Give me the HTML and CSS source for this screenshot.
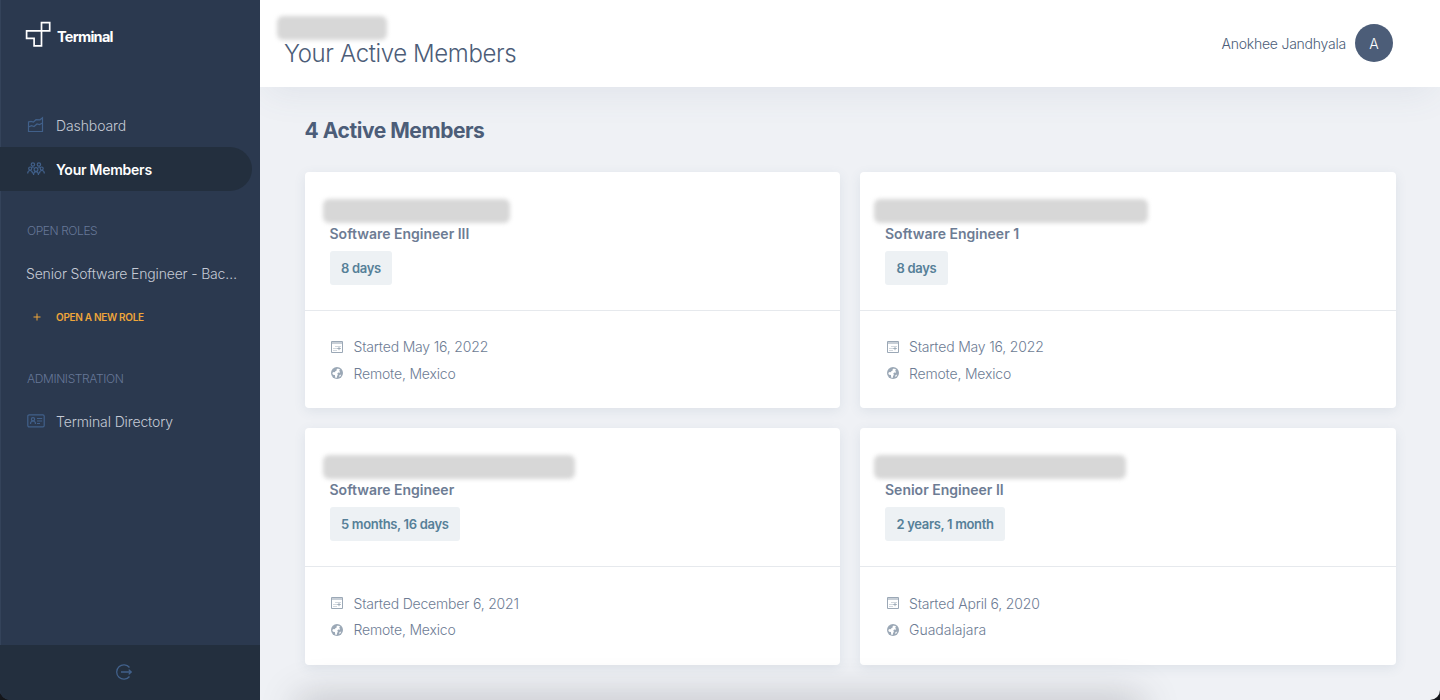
FILE: index.html
```
<!DOCTYPE html>
<html lang="en">
<head>
<meta charset="utf-8">
<title>Terminal - Your Active Members</title>
<link rel="stylesheet" href="styles.css">
</head>
<body>
<svg class="defs" aria-hidden="true">
  <symbol id="calendar" viewBox="0 0 12 12">
    <path d="M.5.500h11v11H.5z" fill="none" stroke="currentColor"/>
    <path d="M1 1h10v2H1z" fill="currentColor" opacity=".55"/>
    <path d="M4.500 5.500h1M6.500 5.500h1M8.500 5.500h1M2.500 7.500h1M4.500 7.500h1M2.500 9.500h1M4.500 9.500h1M6.200 7.500h3.600M8 5.900v3.300" stroke="currentColor" stroke-width=".9"/>
  </symbol>
  <symbol id="globe" viewBox="0 0 12 12">
    <circle cx="6" cy="6" r="6" fill="currentColor"/>
    <path d="M6.800 1.500L5.500 2.600 5.700 3.600 4 4.500 4.200 5.300 2.600 5.100 1.200 6 2 7.700 3.900 8 4.300 10.700 5.600 10.900 6.100 8.900 6.900 7.700 6.300 6.400 7.200 5.500 8.600 5.700 9.200 4.800 8 4 9.200 2.600z" fill="#fff"/>
    <path d="M8.400 8.200l1.800-.7-.7 1.700-1.300.9z" fill="#fff"/>
  </symbol>
</svg>
<div class="window">
  <aside class="sidebar">
    <div class="brand">
      <svg class="brand-mark" viewBox="0 0 26 26"><path d="M16.500 1.700h8.200v8.200H16.500zM1.600 9.900h14.900v14.900H9.100v-7.500H1.600z" fill="none" stroke="currentColor" stroke-width="1.700"/></svg>
      <span class="brand-name">Terminal</span>
    </div>
    <nav class="nav">
      <a class="nav-item">
        <svg class="nav-icon" viewBox="0 0 18 18"><path d="M1.500 15.500V6l2.500-.7 2.500.7L9 3.700l4 .1 2.500-2v13.700zM1.500 11l3-1.300 2.500.8 3-2.500 2.500.5 3-1.500" fill="none" stroke="currentColor" stroke-width="1.200"/></svg>
        <span class="t-dashboard">Dashboard</span>
      </a>
      <a class="nav-item active">
        <svg class="nav-icon" viewBox="0 0 18 18" fill="none" stroke="currentColor" stroke-width="1.200"><circle cx="5.900" cy="4.500" r="1.700"/><circle cx="11.900" cy="4.500" r="1.700"/><circle cx="3.200" cy="8.500" r="1.500"/><circle cx="14.700" cy="8.500" r="1.500"/><circle cx="9" cy="9.500" r="1.900"/><path d="M.7 13.500c0-4 4.800-4 4.800 0M12.500 13.500c0-4 4.800-4 4.800 0M6.500 15c0-4.500 5-4.500 5 0M5 6.600l1.500 1.200M13 6.600l-1.500 1.200"/></svg>
        <span class="t-members">Your Members</span>
      </a>
    </nav>
    <h3 class="nav-title t-roles">OPEN ROLES</h3>
    <a class="nav-role"><span class="t-role">Senior Software Engineer - Bac…</span></a>
    <a class="nav-item add">
      <svg class="plus-icon" viewBox="0 0 18 18"><path d="M6.500 9h7M10 5.500v7" stroke="currentColor"/></svg>
      <span class="t-add">OPEN A NEW ROLE</span>
    </a>
    <h3 class="nav-title t-admin">ADMINISTRATION</h3>
    <a class="nav-item">
      <svg class="nav-icon" viewBox="0 0 18 18" fill="none" stroke="currentColor" stroke-width="1.200"><rect x=".8" y="2.900" width="16.400" height="12" rx="1.300"/><circle cx="6" cy="7.200" r="1.600"/><path d="M3.500 12c0-4 5-4 5 0M10 6.500h5.200M10 9h5.200M10 11.500h3"/></svg>
      <span class="t-directory">Terminal Directory</span>
    </a>
    <div class="logout">
      <svg class="logout-icon" viewBox="0 0 16 16" fill="none" stroke="currentColor" stroke-width="1.300"><path d="M13.500 3.500a7.200 7.200 0 1 0 0 9M5 8h10M12.700 5.600 15.200 8l-2.500 2.400"/></svg>
    </div>
  </aside>
  <main class="main">
    <header class="topbar">
      <div class="heading">
        <span class="redacted r-top"></span>
        <h1 class="page-title">Your Active Members</h1>
      </div>
      <div class="user"><span class="user-name">Anokhee Jandhyala</span><span class="avatar">A</span></div>
    </header>
    <section class="content">
      <h2 class="section-title">4 Active Members</h2>
      <div class="cards">
        <article class="card">
          <div class="card-head">
            <span class="redacted r-one"></span>
            <h4 class="role">Software Engineer III</h4>
            <span class="badge">8 days</span>
          </div>
          <div class="card-body">
            <div class="row"><svg class="row-icon"><use href="#calendar"/></svg><span>Started May 16, 2022</span></div>
            <div class="row"><svg class="row-icon"><use href="#globe"/></svg><span>Remote, Mexico</span></div>
          </div>
        </article>
        <article class="card">
          <div class="card-head">
            <span class="redacted r-two"></span>
            <h4 class="role">Software Engineer 1</h4>
            <span class="badge">8 days</span>
          </div>
          <div class="card-body">
            <div class="row"><svg class="row-icon"><use href="#calendar"/></svg><span>Started May 16, 2022</span></div>
            <div class="row"><svg class="row-icon"><use href="#globe"/></svg><span>Remote, Mexico</span></div>
          </div>
        </article>
        <article class="card">
          <div class="card-head">
            <span class="redacted r-three"></span>
            <h4 class="role">Software Engineer</h4>
            <span class="badge">5 months, 16 days</span>
          </div>
          <div class="card-body">
            <div class="row"><svg class="row-icon"><use href="#calendar"/></svg><span>Started December 6, 2021</span></div>
            <div class="row"><svg class="row-icon"><use href="#globe"/></svg><span>Remote, Mexico</span></div>
          </div>
        </article>
        <article class="card">
          <div class="card-head">
            <span class="redacted r-four"></span>
            <h4 class="role">Senior Engineer II</h4>
            <span class="badge">2 years, 1 month</span>
          </div>
          <div class="card-body">
            <div class="row"><svg class="row-icon"><use href="#calendar"/></svg><span>Started April 6, 2020</span></div>
            <div class="row"><svg class="row-icon"><use href="#globe"/></svg><span class="t-city">Guadalajara</span></div>
          </div>
        </article>
      </div>
    </section>
    <div class="bottom-shade"></div>
  </main>
</div>
</body>
</html>
```
FILE: styles.css
```
* { box-sizing: border-box; }
body { margin: 0; background: #14161a; font-family: Inter, "Liberation Sans", sans-serif; font-size: 14px; font-weight: 300; }
h1, h2, h3, h4 { margin: 0; font-weight: inherit; }
.defs { position: absolute; width: 0; height: 0; }
.window { display: flex; width: 1440px; height: 700px; overflow: hidden; border-radius: 0 0 10px 10px; }

.sidebar { display: flex; flex-direction: column; width: 260px; background: #2b394f; box-shadow: inset 1px 0 #34435a; color: #c5cad5; white-space: nowrap; }
.brand { display: flex; align-items: center; height: 103px; padding: 0 0 35px 25px; color: #fff; }
.brand-mark { width: 26px; height: 26px; margin-right: 6px; }
.brand-name { padding-top: 5px; font-size: 14.500px; font-weight: 700; letter-spacing: -.75px; }
.nav-item { display: flex; flex: none; align-items: center; height: 44px; padding-left: 27px; }
.nav-icon, .plus-icon { width: 18px; height: 18px; margin-right: 11px; }
.nav-icon { color: #41608a; }
.plus-icon { color: #efa63a; }
.active { width: 252px; background: #232f3e; border-radius: 0 22px 22px 0; color: #fff; font-weight: 600; }
.t-dashboard { letter-spacing: -.1px; }
.t-members { letter-spacing: -.25px; }
.nav-title { flex: none; height: 20px; padding-left: 27px; font-size: 12px; line-height: 20px; color: #667797; }
.t-roles { margin-top: 30px; letter-spacing: -.42px; }
.nav-role { display: flex; align-items: center; height: 44px; margin-top: 10px; padding-left: 26px; }
.t-role { letter-spacing: -.17px; }
.add { height: 43px; color: #efa63a; font-size: 10px; font-weight: 600; }
.t-add { letter-spacing: -.31px; }
.t-admin { margin: 31px 0 10px; letter-spacing: -.38px; }
.t-directory { letter-spacing: -.12px; }
.logout { display: flex; height: 55px; margin-top: auto; padding: 19px 0 0 116px; background: #232f3e; }
.logout-icon { width: 16px; height: 16px; color: #41608a; }

.main { position: relative; display: flex; flex-direction: column; flex: 1; background: #eff1f5; overflow: hidden; }
.topbar { display: flex; justify-content: space-between; height: 87px; background: #fff; color: #4c5d78; box-shadow: 0 12px 36px -6px rgba(78, 105, 130, .09); }
.redacted { display: block; height: 24px; background: #d7d7d7; border-radius: 6px; filter: blur(2px); }
.heading { padding: 16px 0 0 17px; }
.r-top { width: 110px; }
.page-title { margin: 1px 0 0 7px; font-size: 24px; line-height: 26px; letter-spacing: -.38px; }
.user { display: flex; align-items: center; gap: 9px; padding: 0 47px 1px 0; }
.user-name { letter-spacing: -.23px; }
.avatar { display: flex; align-items: center; justify-content: center; width: 38px; height: 38px; border-radius: 50%; background: #4c5d78; color: #fff; }
.content { padding: 30px 44.500px 0; }
.section-title { font-size: 21px; font-weight: 700; line-height: 28px; letter-spacing: -.45px; color: #4c5d78; }
.cards { display: grid; grid-template-columns: 1fr 1fr; gap: 20px; margin-top: 27px; }
.card { height: 236.300px; background: #fff; border-radius: 4px; box-shadow: 0 3px 12px rgba(70, 95, 125, .1); color: #6d7c94; }
.card-head { height: 139px; padding: 27px 25px 0; border-bottom: 1px solid #e6e9ed; }
.card-head .redacted { margin-left: -7px; }
.card:nth-child(even) .redacted { margin-left: -11px; }
.r-one { width: 187px; }
.r-two { width: 274px; }
.r-three, .r-four { width: 252px; }
.role { padding-top: 1px; line-height: 20px; font-weight: 600; }
.badge { display: inline-flex; align-items: center; height: 34px; margin-top: 7px; padding: 0 11.500px; background: #edf1f4; border-radius: 3px; color: #568098; font-size: 13px; font-weight: 600; letter-spacing: -.33px; }
.card-body { padding: 22.600px 26.500px; }
.row { display: flex; align-items: center; height: 26.500px; letter-spacing: -.18px; }
.row-icon { width: 12px; height: 12px; margin-right: 10.500px; color: #9ba8b6; }
.t-city { letter-spacing: 0; }
.bottom-shade { position: absolute; left: 40px; bottom: -24px; width: 840px; height: 24px; border-radius: 10px; box-shadow: 0 0 36px 4px rgba(60, 62, 68, .26); }
```
